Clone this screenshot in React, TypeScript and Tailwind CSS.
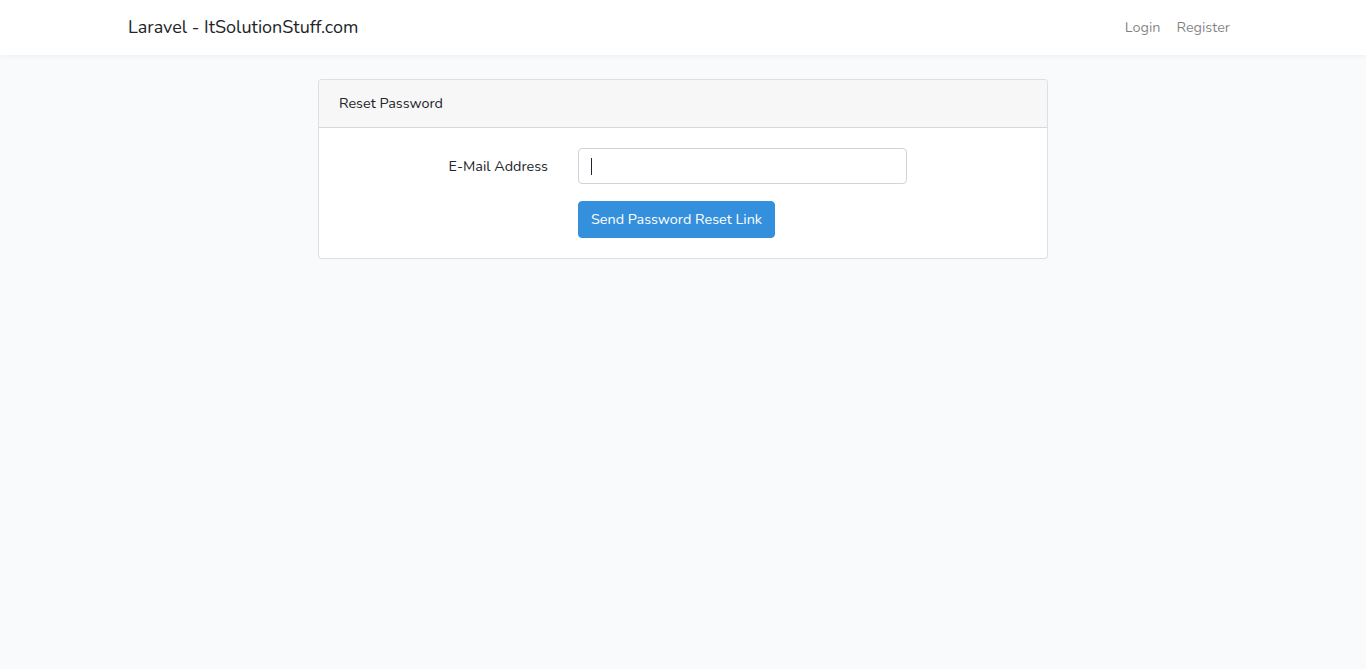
export default function App() {
  return (
    <div
      className="min-h-screen bg-[#f8fafc] text-[#212529] text-[14.4px] leading-[1.6]"
      style={{ fontFamily: 'Nunito, Lato, "Noto Sans", sans-serif' }}
    >
      {/* Navbar */}
      <nav className="bg-white shadow-[0_2px_4px_rgba(0,0,0,0.04)] h-[55px]">
        <div className="mx-auto w-[1140px] px-[15px] h-full flex items-center justify-between">
          <a href="#" className="text-[18px] text-[#212529] leading-[1.6]">
            Laravel - ItSolutionStuff.com
          </a>
          <ul className="flex">
            <li>
              <a href="#" className="block px-2 text-[rgba(0,0,0,0.5)]">Login</a>
            </li>
            <li>
              <a href="#" className="block px-2 text-[rgba(0,0,0,0.5)]">Register</a>
            </li>
          </ul>
        </div>
      </nav>

      {/* Main */}
      <main className="py-6">
        <div className="mx-auto w-[1140px] px-[15px]">
          <div className="flex justify-center">
            <div className="w-[730px] bg-white border border-[rgba(0,0,0,0.125)] rounded-[4px]">
              <div className="px-5 py-3 bg-[#f7f7f7] border-b border-[rgba(0,0,0,0.125)] rounded-t-[3px]">
                Reset Password
              </div>
              <div className="p-5">
                <div className="flex -ml-[16px] mb-4">
                  <label
                    htmlFor="email"
                    className="w-[240px] px-[15px] text-right pt-[7px] pb-[7px] leading-[1.6]"
                  >
                    E-Mail Address
                  </label>
                  <div className="w-[359px] px-[15px] relative">
                    <input
                      id="email"
                      type="email"
                      className="block w-full h-[36px] px-3 py-[6px] bg-white border border-[#ced4da] rounded-[4px] outline-none text-[#495057]"
                    />
                    <span className="absolute left-[28px] top-[10px] w-px h-[17px] bg-[#212529]" />
                  </div>
                </div>
                <div className="flex -ml-[16px]">
                  <div className="ml-[240px] px-[15px]">
                    <button
                      type="submit"
                      className="h-[37px] px-3 bg-[#3490dc] border border-[#3490dc] rounded-[4px] text-white leading-[1.6]"
                    >
                      Send Password Reset Link
                    </button>
                  </div>
                </div>
              </div>
            </div>
          </div>
        </div>
      </main>
    </div>
  );
}
